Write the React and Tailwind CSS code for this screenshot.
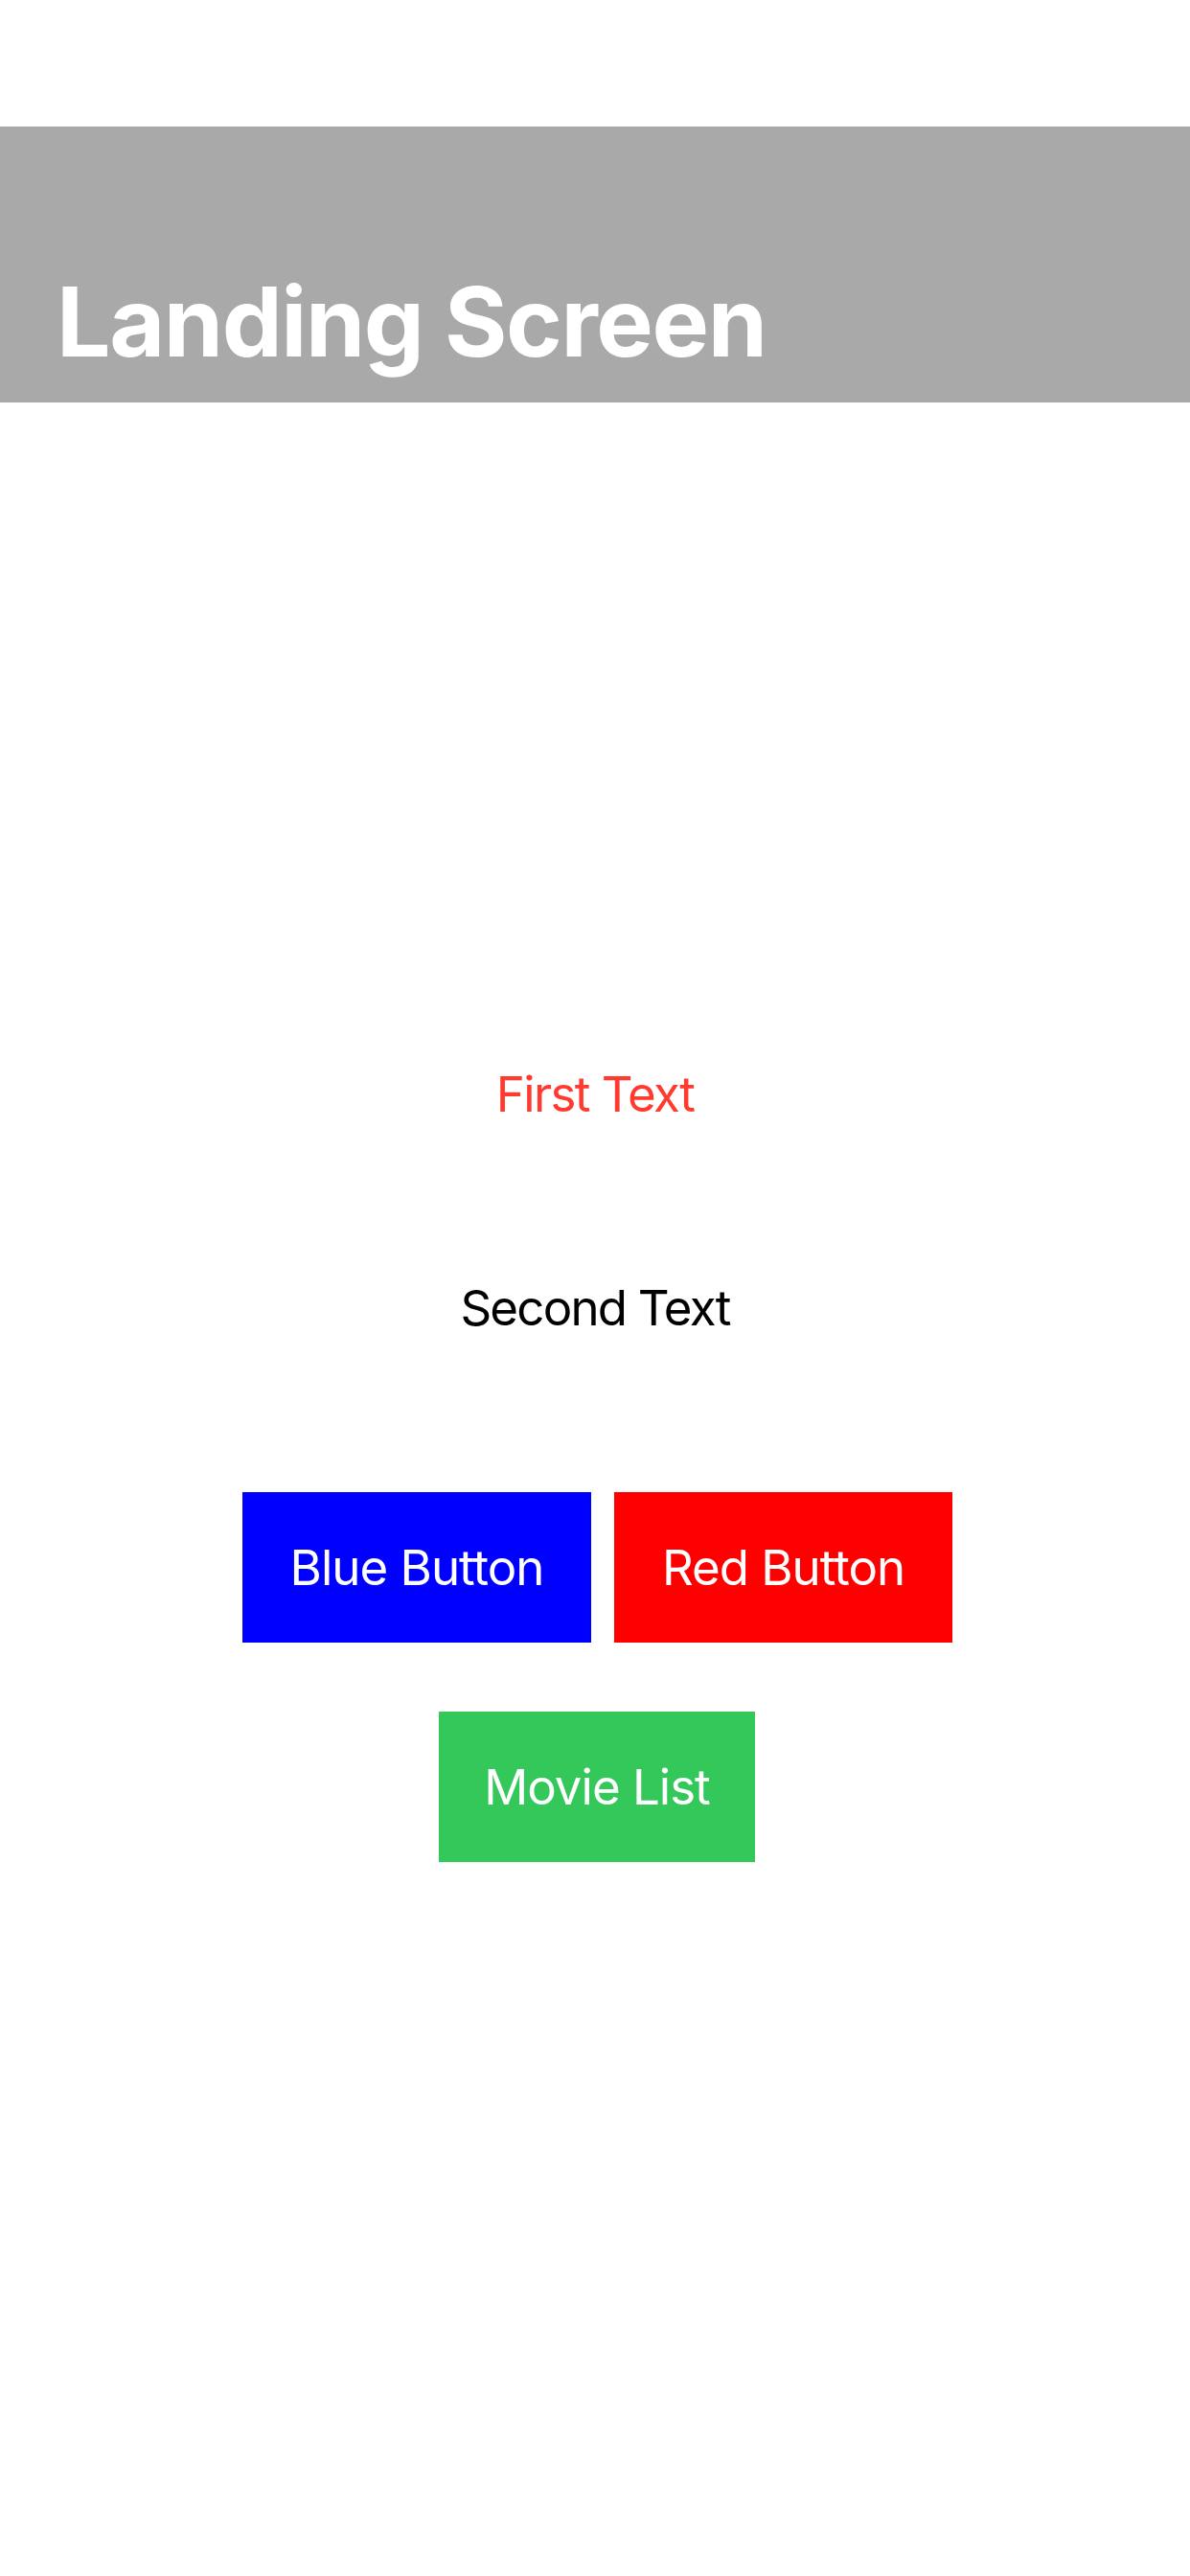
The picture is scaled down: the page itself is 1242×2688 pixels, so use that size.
export default function App() {
  return (
    <div className="min-h-screen bg-white font-['Inter','Liberation_Sans',sans-serif]">
      {/* Status bar space */}
      <div className="h-[132px]" />

      {/* Navigation header */}
      <div className="h-[288px] bg-[#a9a9a9] flex items-end pb-[34px] pl-[59px]">
        <h1 className="text-[100px] leading-none font-bold text-white tracking-[-1.4px]">
          Landing Screen
        </h1>
      </div>

      {/* Content */}
      <div className="flex flex-col items-center pt-[696px]">
        <p className="text-[51px] leading-none tracking-[-1.6px] text-[#ff3b30]">First Text</p>
        <p className="mt-[172px] text-[51px] leading-none tracking-[-1.8px] text-black">Second Text</p>

        <div className="mt-[167px] flex gap-[24px] pl-[5px]">
          <button className="w-[364px] h-[157px] bg-[#0000ff] text-white text-[51px] leading-none tracking-[-1px] flex items-center justify-center">
            Blue Button
          </button>
          <button className="w-[353px] h-[157px] bg-[#ff0000] text-white text-[51px] leading-none tracking-[-1px] flex items-center justify-center">
            Red Button
          </button>
        </div>

        <button className="mt-[72px] ml-[4px] w-[330px] h-[157px] bg-[#34c759] text-white text-[51px] leading-none tracking-[-1px] flex items-center justify-center">
          Movie List
        </button>
      </div>
    </div>
  );
}
